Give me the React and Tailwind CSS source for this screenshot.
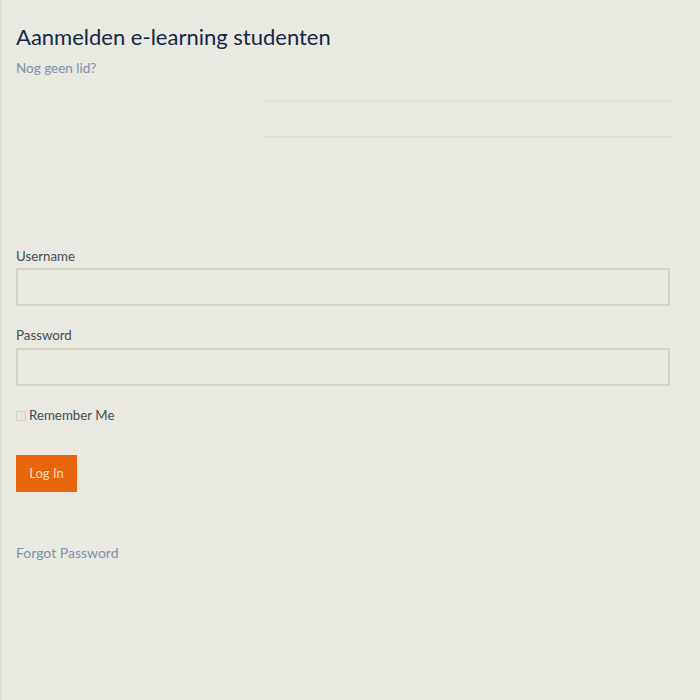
import React from "react";

const LoginPage = () => {
  return (
    <div className="w-full h-[700px] bg-[#e9e8e1] border-l-2 border-l-[#dfded6] pl-[14px] pr-[30px] pt-[22px] font-['Lato',sans-serif]">
      {/* Heading */}
      <h1 className="text-[22px] leading-[30px] text-[#132846]">
        Aanmelden e-learning studenten
      </h1>
      <a className="block mt-[7px] text-[13.5px] leading-[18px] text-[#7c92ae]">Nog geen lid?</a>

      {/* empty table lines */}
      <div className="ml-[248px] mt-[23px] w-[408px] h-[38px] border-y-2 border-y-[#e1e0d8]" />

      {/* Form */}
      <form className="mt-[109px] flex flex-col">
        <label className="text-[13.3px] leading-[18px] text-[#434f56]">Username</label>
        <input className="mt-[3px] h-[38px] w-full border-2 border-[#d5d4c3] bg-[#e9e8e1]" />

        <label className="mt-[20px] text-[13.3px] leading-[18px] text-[#434f56]">Password</label>
        <input type="password" className="mt-[4px] h-[38px] w-full border-2 border-[#d5d4c3] bg-[#e9e8e1]" />

        <div className="mt-[20px] flex items-center gap-[3px]">
          <span className="w-[10px] h-[10px] rounded-[2px] border border-[#cfcec6] bg-[#e6e5de] mt-[2px]" />
          <span className="text-[13.3px] leading-[18px] text-[#434f56]">Remember Me</span>
        </div>

        <div className="mt-[31px]">
          <button type="button" className="w-[61px] h-[37px] bg-[#e9650b] text-[13px] text-[#f9dcc0]">
            Log In
          </button>
        </div>

        <a className="mt-[51px] text-[14px] leading-[20px] text-[#7c92ae]">Forgot Password</a>
      </form>
    </div>
  );
};

export default function App() {
  return <LoginPage />;
}
